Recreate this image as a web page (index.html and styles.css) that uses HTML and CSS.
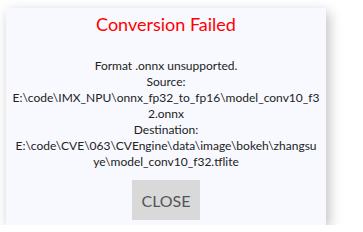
FILE: index.html
```html
<!DOCTYPE html>
<html lang="en">
<head>
    <meta charset="UTF-8">
    <title>Conversion Failed</title>
    <link rel="stylesheet" href="styles.css">
</head>
<body>
    <div class="dialog">
        <h2 class="dialog-title">Conversion Failed</h2>
        <p class="dialog-message">Format .onnx unsupported.
Source:
E:\code\IMX_NPU\onnx_fp32_to_fp16\model_conv10_f32.onnx
Destination:
E:\code\CVE\063\CVEngine\data\image\bokeh\zhangsuye\model_conv10_f32.tflite</p>
        <button class="dialog-button">CLOSE</button>
    </div>
</body>
</html>
```

FILE: styles.css
```css
* {
    margin: 0;
    padding: 0;
    box-sizing: border-box;
}

body {
    font-family: 'Segoe UI', 'Lato', 'Noto Sans', sans-serif;
    background: #ffffff;
}

.dialog {
    margin: 8px 0 0 6px;
    width: 320px;
    height: 217px;
    background-color: #f8f9ff;
    box-shadow: 3px 4px 12px rgba(0, 0, 0, 0.25);
    display: flex;
    flex-direction: column;
    align-items: center;
    padding: 0 6.5px;
}

.dialog-title {
    color: #ff0000;
    font-weight: normal;
    font-size: 18px;
    line-height: 28px;
    margin-top: 2px;
}

.dialog-message {
    margin-top: 20px;
    width: 100%;
    font-size: 12px;
    line-height: 16px;
    color: #222222;
    text-align: center;
    white-space: pre-line;
    word-break: break-all;
}

.dialog-button {
    margin-top: 10px;
    width: 68px;
    height: 40px;
    border: none;
    background-color: #d9d9d9;
    color: #555555;
    font-family: inherit;
    font-size: 16px;
}
```
